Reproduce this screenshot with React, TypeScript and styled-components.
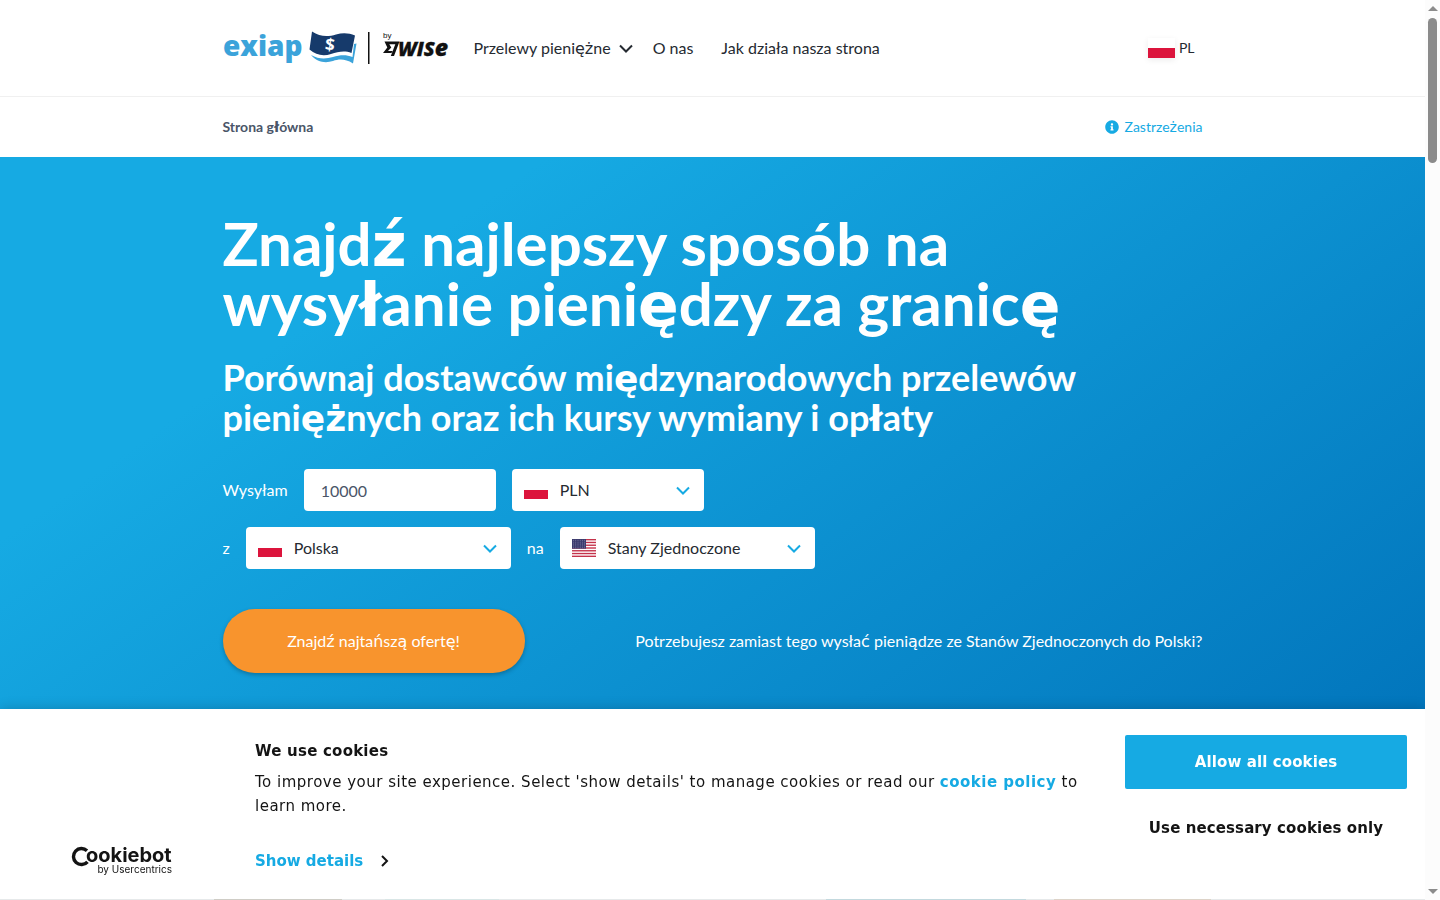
import React from "react";
import styled, { createGlobalStyle, css } from "styled-components";
import { FaInfoCircle } from "react-icons/fa";

const color = {
  brand: "#16aae3",
  deep: "#0071b9",
  orange: "#f8942d",
  ink: "#252a31",
  slate: "#4a5568",
  line: "#f0f0f0",
};

const GlobalStyle = createGlobalStyle`
  *, *::before, *::after { box-sizing: border-box; }
  body {
    margin: 0;
    background: #fff;
    color: ${color.ink};
    font-family: Lato, "Noto Sans", sans-serif;
    font-size: 16px;
    line-height: 24px;
  }
  h1, h2, p { margin: 0; }
  a { color: inherit; text-decoration: none; }
  button, input, select { font: inherit; letter-spacing: inherit; color: inherit; }
`;

/* Polish letters outside Latin-1 are set in DejaVu Sans. */
const ExtendedLetter = styled.span`
  font-family: "DejaVu Sans", sans-serif;
  line-height: 0;
`;

const Polish = ({ children }: { children: string }) => (
  <>
    {children.split(/([ąćęłńśźż]+)/).map((part, i) =>
      i % 2 ? <ExtendedLetter key={i}>{part}</ExtendedLetter> : part
    )}
  </>
);

const Shell = styled.div`
  display: flex;
  height: 100vh;
  overflow: hidden;
`;

const Page = styled.div`
  flex: 1;
  min-width: 0;
  display: flex;
  flex-direction: column;
`;

const Container = styled.div`
  width: 100%;
  max-width: 980px;
  margin: 0 auto;
`;

const Header = styled.header`
  flex: none;
  border-bottom: 1px solid ${color.line};
`;

const HeaderRow = styled(Container)`
  display: flex;
  align-items: center;
  height: 96px;
`;

const LogoLink = styled.a`
  display: block;
  height: 40px;
  margin-right: 24px;
`;

const Nav = styled.nav`
  display: flex;
  align-items: center;
  gap: 28px;
`;

const MenuButton = styled.button`
  display: flex;
  align-items: center;
  gap: 8px;
  margin-right: -8px;
  padding: 0;
  border: 0;
  background: none;
`;

const LanguageButton = styled.button`
  display: flex;
  align-items: center;
  gap: 4px;
  margin-left: auto;
  padding: 0 8px;
  border: 0;
  background: none;
  font-size: 14px;
`;

const Flag = styled.span<{ $wide?: boolean }>`
  flex: none;
  display: block;
  width: ${(p) => (p.$wide ? 27 : 24)}px;
  height: ${(p) => (p.$wide ? 20 : 18)}px;
  ${(p) =>
    p.$wide &&
    css`
      box-shadow: 0 2px 6px rgba(0, 0, 0, 0.08);
    `}
  svg { display: block; width: 100%; height: 100%; }
`;

const SubBar = styled(Container)`
  flex: none;
  display: flex;
  align-items: center;
  justify-content: space-between;
  height: 60px;
  font-size: 14px;
`;

const Crumb = styled.a`
  color: ${color.slate};
  font-weight: 700;
`;

const InfoLink = styled.a`
  display: flex;
  align-items: center;
  gap: 6px;
  color: ${color.brand};
`;

const Hero = styled.main`
  flex: 1;
  padding: 56px 0;
  background: linear-gradient(145deg, ${color.brand} 22%, ${color.deep} 95%);
  color: #fff;
`;

const Title = styled.h1`
  max-width: 860px;
  font-size: 60px;
  line-height: 60px;
  font-weight: 700;
`;

const Subtitle = styled.h2`
  max-width: 880px;
  margin-top: 24px;
  font-size: 36px;
  line-height: 40px;
  font-weight: 700;
`;

const Form = styled.form`
  display: flex;
  flex-direction: column;
  gap: 16px;
  margin-top: 32px;
`;

const FieldRow = styled.div`
  display: flex;
  align-items: center;
  gap: 16px;
`;

const AmountInput = styled.input`
  width: 192px;
  height: 42px;
  padding: 0 17px;
  border: 0;
  border-radius: 4px;
  background: #fff;
  color: ${color.slate};
`;

const SelectBox = styled.span<{ $width: number }>`
  display: flex;
  align-items: center;
  gap: 12px;
  width: ${(p) => p.$width}px;
  height: 42px;
  padding: 0 14px 0 12px;
  border-radius: 4px;
  background: #fff;
  color: ${color.ink};
`;

const SelectField = styled.select`
  flex: 1;
  min-width: 0;
  height: 42px;
  padding: 0;
  border: 0;
  background: none;
  appearance: none;
`;

const ActionRow = styled.div`
  display: flex;
  align-items: center;
  justify-content: space-between;
  margin-top: 24px;
`;

const SubmitButton = styled.button`
  width: 302px;
  height: 64px;
  border: 0;
  border-radius: 32px;
  background: ${color.orange};
  box-shadow: 0 2px 4px rgba(0, 0, 0, 0.25);
  color: #fff;
`;

const ScrollTrack = styled.div`
  flex: none;
  display: flex;
  flex-direction: column;
  align-items: center;
  justify-content: space-between;
  width: 15px;
  padding: 6px 0;
  background: #fcfcfc;
`;

const ScrollThumb = styled.div`
  width: 9px;
  height: 145px;
  margin-top: 7px;
  margin-bottom: auto;
  border-radius: 5px;
  background: #8b8b8b;
`;

const ScrollArrow = styled.span<{ $down?: boolean }>`
  border: 5px solid transparent;
  ${(p) => (p.$down ? "border-top-color: #8b8b8b; border-bottom: 0;" : "border-bottom-color: #8b8b8b; border-top: 0;")}
`;

const BannerLayer = styled.div`
  position: fixed;
  left: 0;
  right: 15px;
  bottom: 0;
  padding-top: 32px;
  overflow: hidden;
  pointer-events: none;
`;

const CookieBanner = styled.section`
  display: flex;
  height: 190px;
  background: #fff;
  box-shadow: 0 0 12px rgba(0, 0, 0, 0.2);
  color: #141414;
  font-family: "DejaVu Sans", sans-serif;
  font-size: 15px;
  pointer-events: auto;
`;

/* Top edge of the partner logo strip that follows the banner. */
const PartnerEdge = styled.div`
  position: relative;
  height: 1px;
  background: linear-gradient(
    90deg,
    #e6e9ea 15%, #cfcdc6 15%, #cfcdc6 24%, #e6e9ea 24%, #e6e9ea 27%, #d9e6e6 27%, #d9e6e6 35%,
    #e6e9ea 35%, #e6e9ea 58%, #c3d9de 58%, #c3d9de 72%, #e6e9ea 72%, #e6e9ea 74%, #ddd3c8 74%,
    #ddd3c8 85%, #e6e9ea 85%
  );
`;

const BannerBrand = styled.a`
  display: flex;
  align-items: flex-end;
  justify-content: flex-end;
  width: 173px;
  padding-bottom: 20px;
`;

const BannerBody = styled.div`
  flex: 1;
  display: flex;
  flex-direction: column;
  align-items: flex-start;
  padding: 30px 44px 26px 82px;
`;

const BannerTitle = styled.h2`
  font-size: 15px;
  line-height: 24px;
  letter-spacing: 0.015em;
`;

const BannerText = styled.p`
  margin-top: 7px;
  letter-spacing: 0.033em;
`;

const PolicyLink = styled.a`
  color: ${color.brand};
  font-weight: 700;
`;

const DetailsLink = styled.a`
  display: flex;
  align-items: center;
  gap: 18px;
  margin-top: auto;
  color: ${color.brand};
  font-weight: 700;
`;

const BannerActions = styled.div`
  display: flex;
  flex-direction: column;
  gap: 12px;
  width: 300px;
  padding: 26px 18px 0 0;
`;

const BannerButton = styled.button<{ $primary?: boolean }>`
  height: 54px;
  border: 0;
  border-radius: 2px;
  background: ${(p) => (p.$primary ? color.brand : "#fff")};
  color: ${(p) => (p.$primary ? "#fff" : "#141414")};
  font-weight: 700;
  letter-spacing: 0.007em;
`;

const PolandFlag = ({ wide }: { wide?: boolean }) => (
  <Flag $wide={wide}>
    <svg viewBox="0 0 4 2" preserveAspectRatio="none" shapeRendering="crispEdges" aria-hidden="true">
      <rect width="4" height="2" fill="#fff" />
      <rect y="1" width="4" height="1" fill="#dc143c" />
    </svg>
  </Flag>
);

const UsaFlag = () => (
  <Flag>
    <svg viewBox="0 0 24 18" aria-hidden="true">
      <rect width="24" height="18" fill="#fff" />
      {[0, 1, 2, 3, 4, 5, 6].map((i) => (
        <rect key={i} y={(i * 36) / 13} width="24" height={18 / 13} fill="#c4334b" />
      ))}
      <rect width="14" height={(18 * 7) / 13} fill="#3c3b6e" />
      {[0, 1, 2, 3, 4].map((r) =>
        [0, 1, 2, 3, 4, 5].map((c) => (
          <circle key={`${r}-${c}`} cx={1.6 + c * 2.2} cy={1.2 + r * 1.9} r="0.4" fill="#c5c8dc" />
        ))
      )}
    </svg>
  </Flag>
);

const Chevron = ({ stroke, size = 14 }: { stroke: string; size?: number }) => (
  <svg width={size} height={size} viewBox="0 0 14 14" fill="none" stroke={stroke} strokeWidth="2" aria-hidden="true">
    <path d="M1 4.500 7 10.500 13 4.500" />
  </svg>
);

const ExiapLogo = () => (
  <svg width="227" height="40" viewBox="0 0 227 40" role="img" aria-label="Exiap by Wise">
    <text x="0" y="28" fontFamily="Open Sans" fontWeight="800" fontSize="28" fill="#3ba3da">exiap</text>
    <path d="M89 3.500C97 9 105 9 113 6.500C120 4.500 126 5 132 7.500L128.500 25C121 22 115 24 108 26C100 28.500 93 27 86.500 21.500Z" fill="#163a6b" />
    <path d="M88 27C96 31.500 103 31 110 29C117 27 123 26.500 129.500 29L131 16L133.500 15.500L130 35.500C122 30.500 116 31 110 33C102 35.500 94 34 88 27Z" fill="#3ba3da" />
    <text x="107" y="22.500" textAnchor="middle" fontFamily="Open Sans" fontWeight="700" fontSize="17" fill="#fff" transform="rotate(6 107 16)">$</text>
    <rect x="145" y="4" width="1.500" height="32" fill="#111" />
    <text x="160" y="10" fontFamily="Liberation Sans" fontSize="8" fill="#111">by</text>
    <path d="M161.500 13.500H176.500L171 28H167.800L172.300 16.200H166.300L168.300 19.600L165 23H169.500L168.500 25H160L164.300 19.500Z" fill="#111" />
    <text x="175" y="28" fontFamily="Open Sans" fontStyle="italic" fontWeight="800" fontSize="20" fill="#111" stroke="#111" strokeWidth=".3">
      WIS<tspan fontSize="23">e</tspan>
    </text>
  </svg>
);

const CookiebotLogo = () => (
  <svg width="104" height="34" viewBox="0 0 104 34" role="img" aria-label="Cookiebot by Usercentrics">
    <path d="M18 5.800A8 8 0 1 0 18.500 16.800" fill="none" stroke="#141414" strokeWidth="3.400" />
    <text x="17" y="17" fontFamily="Inter" fontWeight="700" fontSize="20" fill="#141414">ookiebot</text>
    <text x="103" y="28" textAnchor="end" fontFamily="Inter" fontSize="10" fill="#141414">by Usercentrics</text>
  </svg>
);

export default function App() {
  return (
    <>
      <GlobalStyle />
      <Shell>
        <Page>
          <Header>
            <HeaderRow>
              <LogoLink href="#"><ExiapLogo /></LogoLink>
              <Nav>
                <MenuButton type="button">
                  <span><Polish>Przelewy pieniężne</Polish></span>
                  <Chevron stroke={color.ink} />
                </MenuButton>
                <a href="#about">O nas</a>
                <a href="#how"><Polish>Jak działa nasza strona</Polish></a>
              </Nav>
              <LanguageButton type="button">
                <PolandFlag wide />
                PL
              </LanguageButton>
            </HeaderRow>
          </Header>
          <SubBar>
            <Crumb href="#"><Polish>Strona główna</Polish></Crumb>
            <InfoLink href="#disclaimer">
              <FaInfoCircle size={14} />
              <span><Polish>Zastrzeżenia</Polish></span>
            </InfoLink>
          </SubBar>
          <Hero>
            <Container>
              <Title><Polish>Znajdź najlepszy sposób na wysyłanie pieniędzy za granicę</Polish></Title>
              <Subtitle>
                <Polish>Porównaj dostawców międzynarodowych przelewów pieniężnych oraz ich kursy wymiany i opłaty</Polish>
              </Subtitle>
              <Form onSubmit={(e) => e.preventDefault()}>
                <FieldRow>
                  <label htmlFor="amount"><Polish>Wysyłam</Polish></label>
                  <AmountInput id="amount" defaultValue="10000" />
                  <SelectBox $width={192}>
                    <PolandFlag />
                    <SelectField aria-label="Waluta"><option>PLN</option></SelectField>
                    <Chevron stroke={color.brand} />
                  </SelectBox>
                </FieldRow>
                <FieldRow>
                  <label htmlFor="from">z</label>
                  <SelectBox $width={265}>
                    <PolandFlag />
                    <SelectField id="from"><option>Polska</option></SelectField>
                    <Chevron stroke={color.brand} />
                  </SelectBox>
                  <label htmlFor="to">na</label>
                  <SelectBox $width={255}>
                    <UsaFlag />
                    <SelectField id="to"><option>Stany Zjednoczone</option></SelectField>
                    <Chevron stroke={color.brand} />
                  </SelectBox>
                </FieldRow>
                <ActionRow>
                  <SubmitButton type="submit"><Polish>Znajdź najtańszą ofertę!</Polish></SubmitButton>
                  <a href="#reverse">
                    <Polish>Potrzebujesz zamiast tego wysłać pieniądze ze Stanów Zjednoczonych do Polski?</Polish>
                  </a>
                </ActionRow>
              </Form>
            </Container>
          </Hero>
        </Page>
        <ScrollTrack aria-hidden="true">
          <ScrollArrow />
          <ScrollThumb />
          <ScrollArrow $down />
        </ScrollTrack>
      </Shell>
      <BannerLayer>
        <CookieBanner aria-label="Cookies">
          <BannerBrand href="#cookiebot"><CookiebotLogo /></BannerBrand>
          <BannerBody>
            <BannerTitle>We use cookies</BannerTitle>
            <BannerText>
              To improve your site experience. Select 'show details' to manage cookies or read our{" "}
              <PolicyLink href="#policy">cookie policy</PolicyLink> to learn more.
            </BannerText>
            <DetailsLink href="#details">
              Show details
              <svg width="8" height="12" viewBox="0 0 8 12" fill="none" stroke="#141414" strokeWidth="2" aria-hidden="true">
                <path d="M1 1 6 6 1 11" />
              </svg>
            </DetailsLink>
          </BannerBody>
          <BannerActions>
            <BannerButton type="button" $primary>Allow all cookies</BannerButton>
            <BannerButton type="button">Use necessary cookies only</BannerButton>
          </BannerActions>
        </CookieBanner>
        <PartnerEdge />
      </BannerLayer>
    </>
  );
}
